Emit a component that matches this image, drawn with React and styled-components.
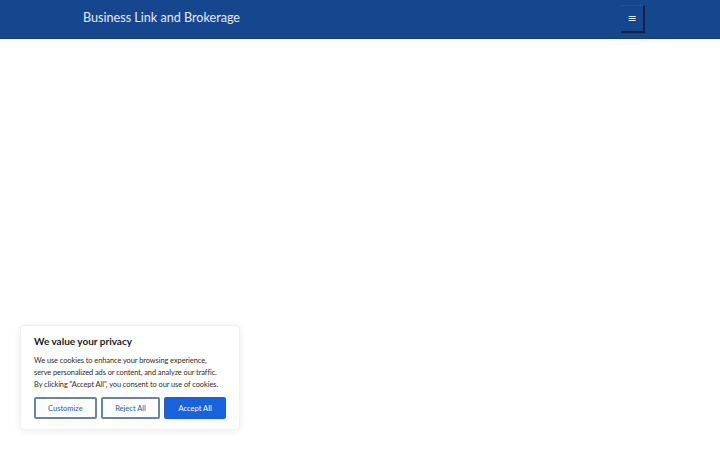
import React from "react";
import styled, { createGlobalStyle } from "styled-components";

const Global = createGlobalStyle`
  html, body {
    margin: 0;
    padding: 0;
    background: #ffffff;
    font-family: "Lato", "Open Sans", sans-serif;
  }
  * { box-sizing: border-box; }
`;

const Page = styled.div`
  position: relative;
  width: 720px;
  height: 450px;
  overflow: hidden;
  background: #fff;
`;

const Header = styled.header`
  height: 39px;
  background: #16478e;
  border-bottom: 1px solid #123c7a;
  display: flex;
  align-items: center;
  justify-content: space-between;
  padding: 0 75px 0 83px;
`;

const Brand = styled.a`
  color: #e4ebf6;
  font-size: 12.6px;
  text-decoration: none;
  margin-top: -3px;
`;

const MenuToggle = styled.button`
  width: 24px;
  height: 28px;
  margin-top: -1px;
  background: #16478e;
  border: none;
  border-right: 2px solid #0b2148;
  border-bottom: 2px solid #0b2148;
  border-top: 1px solid #24528f;
  color: #dde5f2;
  font-size: 11px;
  line-height: 1;
  padding: 0;
  font-family: "DejaVu Sans", sans-serif;
  display: flex;
  align-items: center;
  justify-content: center;
`;

const Banner = styled.div`
  position: absolute;
  left: 20px;
  top: 325px;
  width: 220px;
  padding: 9px 13px 10px;
  background: #fff;
  border: 1px solid #f1f1f1;
  box-shadow: 0 1px 8px rgba(0, 0, 0, 0.08);
  border-radius: 4px;
`;

const Heading = styled.h2`
  margin: 0 0 8px;
  font-size: 10px;
  font-weight: 700;
  color: #212121;
`;

const Body = styled.p`
  margin: 0 0 6px;
  font-size: 7.4px;
  line-height: 12px;
  color: #2a2a2a;
  letter-spacing: -0.05px;
`;

const Actions = styled.div`
  display: flex;
  gap: 4px;
`;

const Btn = styled.button`
  height: 22px;
  width: ${({ w }) => w}px;
  font-family: inherit;
  font-size: 7.5px;
  border-radius: 2px;
  padding: 0;
  border: 2px solid ${({ primary }) => (primary ? "#1863dc" : "#6785a8")};
  background: ${({ primary }) => (primary ? "#1863dc" : "#fff")};
  color: ${({ primary }) => (primary ? "#fff" : "#2a5a9e")};
`;

export default function App() {
  return (
    <Page>
      <Global />
      <Header>
        <Brand href="#">Business Link and Brokerage</Brand>
        <MenuToggle aria-label="Menu">≡</MenuToggle>
      </Header>
      <Banner>
        <Heading>We value your privacy</Heading>
        <Body>
          We use cookies to enhance your browsing experience,
          <br />
          serve personalized ads or content, and analyze our traffic.
          <br />
          By clicking "Accept All", you consent to our use of cookies.
        </Body>
        <Actions>
          <Btn w={63}>Customize</Btn>
          <Btn w={60}>Reject All</Btn>
          <Btn w={62} primary>
            Accept All
          </Btn>
        </Actions>
      </Banner>
    </Page>
  );
}
